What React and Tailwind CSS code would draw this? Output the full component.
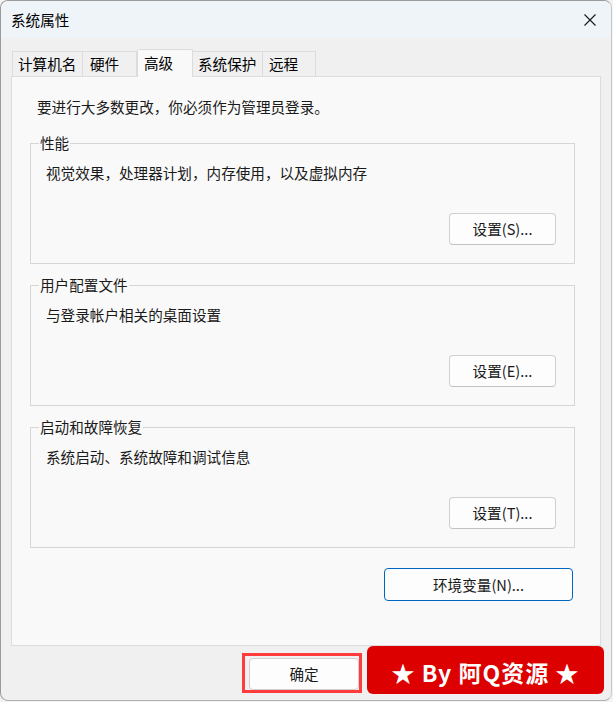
import React from "react";

const font = { fontFamily: '"Noto Sans CJK SC", "Noto Sans", sans-serif' };

const tabs = [
  { label: "计算机名", w: "w-[71px]", pl: "pl-[5px]" },
  { label: "硬件", w: "w-[54px]", pl: "pl-[7px]" },
  { label: "高级", w: "w-[56px]", active: true },
  { label: "系统保护", w: "w-[70px]", pl: "pl-[5px]" },
  { label: "远程", w: "w-[53px]", pl: "pl-[6px]" },
];

const groups = [
  { title: "性能", text: "视觉效果，处理器计划，内存使用，以及虚拟内存", btn: "设置(S)..." },
  { title: "用户配置文件", text: "与登录帐户相关的桌面设置", btn: "设置(E)..." },
  { title: "启动和故障恢复", text: "系统启动、系统故障和调试信息", btn: "设置(T)..." },
];

const Group = ({ title, text, btn }) => (
  <fieldset className="border border-[#d6d6d6] w-[545px] h-[131px] pl-[15px] pr-[18px]">
    <legend className="ml-[-7px] px-[1px] leading-[20px]">{title}</legend>
    <div className="mt-[10px] leading-[20px]">{text}</div>
    <div className="flex justify-end mt-[30px]">
      <button className="w-[107px] h-[32px] rounded-[4px] border border-[#d0d0d0] border-b-[#c2c2c2] bg-[#fdfdfd] leading-[20px]">
        {btn}
      </button>
    </div>
  </fieldset>
);

export default function App() {
  return (
    <div className="w-[613px] h-[702px] bg-[#f3f3f3]" style={font}>
      <div className="w-[612px] h-[701px] border border-[#9a9a9a] border-r-[#c8c8c8] border-b-[#b0b0b0] rounded-[8px] bg-[#f0f0f0] overflow-hidden flex flex-col text-[14.6px] text-[#1a1a1a]">
        <div className="h-[37px] bg-[#eff4f9] flex items-center justify-between pl-[10px] pr-[15px] shrink-0">
          <span className="leading-[20px] text-black">系统属性</span>
          <svg width="12" height="12" viewBox="0 0 12 12">
            <path d="M0.5 0.5 L11.5 11.5 M11.5 0.5 L0.5 11.5" stroke="#1a1a1a" strokeWidth="1.1" />
          </svg>
        </div>

        <div className="mt-[11px] pl-[11px] flex items-end h-[28px] -mb-px relative z-10">
          {tabs.map((t) =>
            t.active ? (
              <div
                key={t.label}
                className={`${t.w} h-[28px] bg-[#f9f9f9] border border-b-0 border-[#dcdcdc] rounded-t-[2px] pl-[6px] pt-[3px] leading-[20px] text-black`}
              >
                {t.label}
              </div>
            ) : (
              <div
                key={t.label}
                className={`${t.w} ${t.pl} h-[26px] bg-[#f0f0f0] border border-l-0 first:border-l border-[#dcdcdc] pt-[2px] leading-[20px] text-black`}
              >
                {t.label}
              </div>
            )
          )}
        </div>

        <div className="ml-[10px] w-[590px] h-[570px] border border-[#dcdcdc] bg-[#f9f9f9] pl-[18px] pt-[20px] flex flex-col shrink-0">
          <div className="pl-[7px] leading-[20px]">要进行大多数更改，你必须作为管理员登录。</div>
          <div className="mt-[16px] flex flex-col gap-[11px]">
            {groups.map((g) => (
              <Group key={g.title} {...g} />
            ))}
          </div>
          <div className="mt-[20px] w-[543px] flex justify-end">
            <button className="w-[189px] h-[33px] rounded-[4px] border border-[#0067c0] bg-[#fdfdfd] leading-[20px]">
              环境变量(N)...
            </button>
          </div>
        </div>

        <div className="flex items-start pl-[241px] gap-[5px]">
          <div className="mt-[7px] w-[120px] h-[40px] border-[3px] border-[#ff3b3b] pl-[4px] pt-[2px]">
            <button className="w-[110px] h-[32px] rounded-[4px] border border-[#d0d0d0] bg-[#fdfdfd] leading-[20px]">
              确定
            </button>
          </div>
          <div className="w-[237px] h-[48px] bg-[#dd0000] rounded-[6px] flex items-center justify-center pt-[3px] text-white font-bold text-[23px] leading-[28px] tracking-[1px]">
            ★ By 阿Q资源 ★
          </div>
        </div>
      </div>
    </div>
  );
}
